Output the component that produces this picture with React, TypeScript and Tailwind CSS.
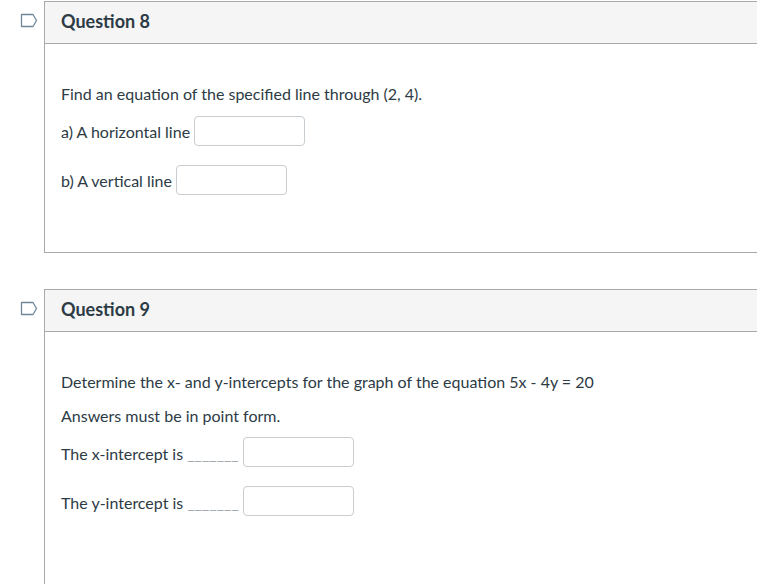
import React from 'react';

const FlagIcon: React.FC = () => (
  <svg width="18" height="15" viewBox="0 0 18 15" className="block">
    <path d="M1.5 1.5 H13 L16.5 7.5 L13 13.5 H1.5 Z" fill="none" stroke="#6f8799" strokeWidth="1.3" strokeLinejoin="round" />
  </svg>
);

const AnswerBox: React.FC = () => (
  <input type="text" className="inline-block align-middle w-[111px] h-[30px] border border-[#c7cdd1] rounded-[4px] bg-white" />
);

interface QuestionProps {
  title: string;
  children: React.ReactNode;
  bodyClass: string;
}

const Question: React.FC<QuestionProps> = ({ title, children, bodyClass }) => (
  <div className="flex">
    <div className="w-[44px] shrink-0 pl-[20px] pt-[12px]">
      <FlagIcon />
    </div>
    <div className="w-[760px] shrink-0 border border-[#a9a9a9]">
      <div className="h-[42px] bg-[#f5f5f5] border-b border-[#a9a9a9] pl-4 flex items-center">
        <h2 className="text-[18px] font-bold text-[#2d3b45] leading-none pb-[4px]">{title}</h2>
      </div>
      <div className={bodyClass}>{children}</div>
    </div>
  </div>
);

export default function App() {
  return (
    <div className="w-[757px] h-[584px] overflow-hidden bg-white pt-[1px] text-[#2d3b45] text-[16px] leading-6 font-['Lato','Liberation_Sans',sans-serif]">
      <Question title="Question 8" bodyClass="pl-4 pt-[38px] pb-[57px]">
        <p>Find an equation of the specified line through (2, 4).</p>
        <div className="mt-[10px] h-[30px] flex items-center">
          <span className="pt-[2px]">a) A horizontal line&nbsp;</span>
          <AnswerBox />
        </div>
        <div className="mt-[19px] h-[30px] flex items-center">
          <span className="pt-[2px]">b) A vertical line&nbsp;</span>
          <AnswerBox />
        </div>
      </Question>

      <div className="h-[36px]" />

      <Question title="Question 9" bodyClass="pl-4 pt-[38px] pb-[100px]">
        <p>Determine the x- and y-intercepts for the graph of the equation 5x - 4y = 20</p>
        <p className="mt-[10px]">Answers must be in point form.</p>
        <div className="mt-[9px] h-[30px] flex items-center">
          <span className="pt-[3px]">The x-intercept is <span className="text-[#a3aab0]">_______</span>&nbsp;</span>
          <AnswerBox />
        </div>
        <div className="mt-[19px] h-[30px] flex items-center">
          <span className="pt-[3px]">The y-intercept is <span className="text-[#a3aab0]">_______</span>&nbsp;</span>
          <AnswerBox />
        </div>
      </Question>
    </div>
  );
}
